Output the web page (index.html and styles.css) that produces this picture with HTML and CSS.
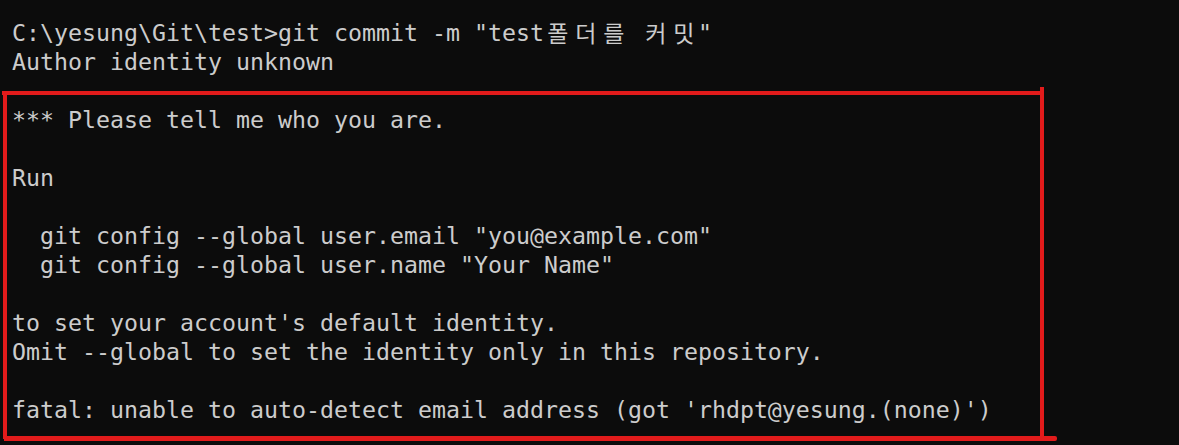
FILE: index.html
```html
<!DOCTYPE html>
<html lang="ko">
<head>
<meta charset="utf-8">
<link rel="stylesheet" href="styles.css">
</head>
<body>
<div class="term">
<div class="line">C:\yesung\Git\test&gt;git commit -m "test<span class="wide">폴</span><span class="wide">더</span><span class="wide">를</span> <span class="wide">커</span><span class="wide">밋</span>"</div>
<div class="line">Author identity unknown</div>
<div class="line"> </div>
<div class="line">*** Please tell me who you are.</div>
<div class="line"> </div>
<div class="line">Run</div>
<div class="line"> </div>
<div class="line">  git config --global user.email "you@example.com"</div>
<div class="line">  git config --global user.name "Your Name"</div>
<div class="line"> </div>
<div class="line">to set your account's default identity.</div>
<div class="line">Omit --global to set the identity only in this repository.</div>
<div class="line"> </div>
<div class="line">fatal: unable to auto-detect email address (got 'rhdpt@yesung.(none)')</div>
</div>
<div class="mark mark-top"></div>
<div class="mark mark-right"></div>
<div class="mark mark-bottom"></div>
<div class="mark mark-left"></div>
</body>
</html>
```
FILE: styles.css
```css
html, body {
  margin: 0;
  padding: 0;
  background: #0c0c0c;
  width: 1179px;
  height: 445px;
  overflow: hidden;
}
body {
  position: relative;
}
.term {
  padding: 18px 0 0 12px;
  font-family: "DejaVu Sans Mono", "Noto Sans CJK KR", monospace;
  font-size: 23.26px;
  line-height: 29px;
  color: #cccccc;
}
.line {
  height: 29px;
  white-space: pre;
}
.wide {
  display: inline-block;
  width: 28px;
  font-family: "Noto Sans CJK KR", sans-serif;
  font-size: 23px;
  text-align: center;
  line-height: 29px;
  vertical-align: top;
}
.mark {
  position: absolute;
  background: #e21b1b;
}
.mark-top {
  left: 2px;
  top: 91px;
  width: 1040px;
  height: 4px;
}
.mark-right {
  left: 1040px;
  top: 87px;
  width: 4px;
  height: 351px;
}
.mark-bottom {
  left: 4px;
  top: 436px;
  width: 1053px;
  height: 5px;
  border-radius: 0 2px 2px 0;
}
.mark-left {
  left: 3px;
  top: 91px;
  width: 4px;
  height: 348px;
}
```
